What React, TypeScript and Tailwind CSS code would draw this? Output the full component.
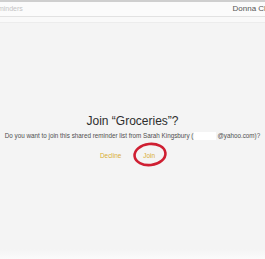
import React from 'react';

const App: React.FC = () => {
  return (
    <div className="w-[265px] h-[259px] overflow-hidden bg-[#f4f4f4] flex flex-col" style={{ fontFamily: '"Liberation Sans", Arial, sans-serif' }}>
      <div className="h-[2px] bg-[#cfcfcf]" />
      <div className="h-[15px] bg-[#fbfbfb] border-b border-[#e2e2e2] flex items-center justify-between">
        <span className="text-[7px] text-[#c4c4c4] -ml-[11px]">Reminders</span>
        <span className="text-[8px] text-[#555] whitespace-nowrap -mr-[12px]">Donna Clark</span>
      </div>
      <div className="h-[6px] bg-[#f9f9f9] border-b border-[#ececec]" />

      <div className="flex-1 flex flex-col items-center pt-[90px] relative">
        <h1 className="text-[12px] leading-[16px] text-[#2e2e2e]">Join “Groceries”?</h1>
        <p className="mt-[2px] text-[6.3px] leading-[9px] text-[#4f4f4f] whitespace-nowrap flex items-center">
          Do you want to join this shared reminder list from Sarah Kingsbury (
          <span className="inline-block w-[22px] h-[8px] bg-white mx-[1px]" />
          @yahoo.com)?
        </p>
        <div className="mt-[11px] flex items-center gap-[22px] text-[6.4px] text-[#d8ad34] -ml-[10px]">
          <span>Decline</span>
          <span className="relative">
            Join
            <svg className="absolute -left-[11px] -top-[9px]" width="36" height="25" viewBox="0 0 36 25">
              <ellipse cx="18" cy="12.5" rx="15.5" ry="10.5" fill="none" stroke="#cf1f32" strokeWidth="2.6" transform="rotate(-6 18 12.5)" />
            </svg>
          </span>
        </div>
        <div className="absolute left-0 right-0 bottom-0 h-[10px] bg-gradient-to-b from-[#f4f4f4] to-[#fbfbfb]" />
      </div>
    </div>
  );
};

export default App;
